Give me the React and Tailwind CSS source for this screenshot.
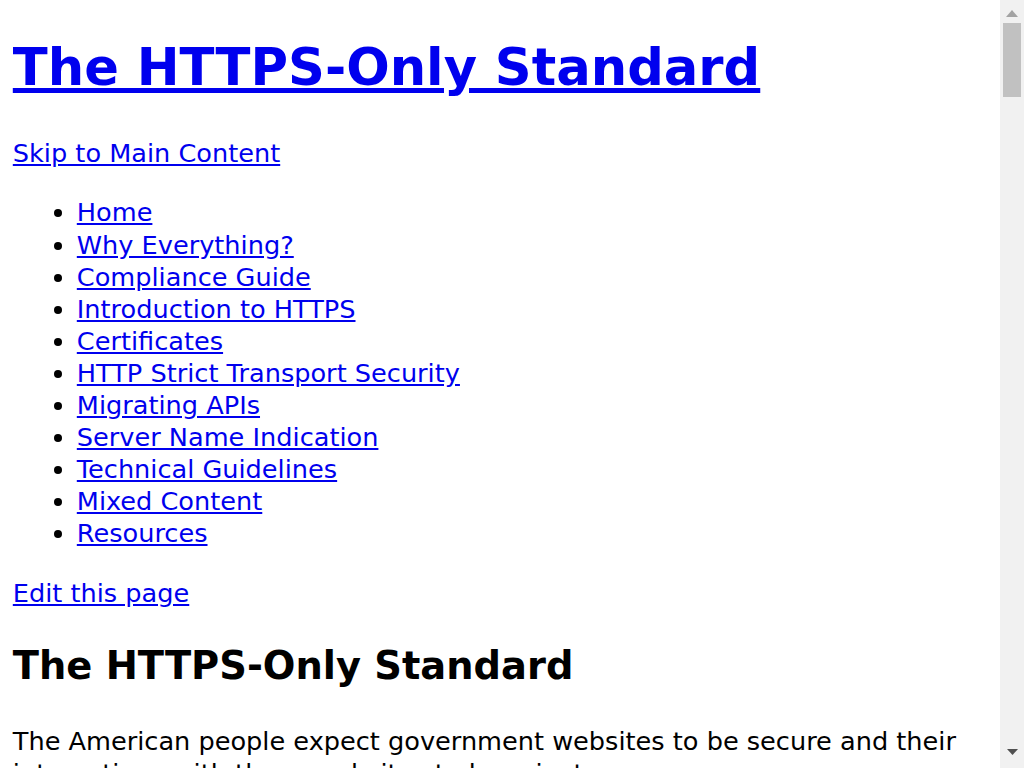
import React from 'react';

const navLinks = [
  'Home',
  'Why Everything?',
  'Compliance Guide',
  'Introduction to HTTPS',
  'Certificates',
  'HTTP Strict Transport Security',
  'Migrating APIs',
  'Server Name Indication',
  'Technical Guidelines',
  'Mixed Content',
  'Resources',
];

const linkClass = 'text-[#0000ee] underline';

function Scrollbar() {
  return (
    <aside className="w-[24px] shrink-0 bg-[#f1f1f1] flex flex-col items-center">
      <svg className="mt-[10px]" width="12" height="7" viewBox="0 0 12 7">
        <path d="M6 0 L12 7 L0 7 Z" fill="#a3a3a3" />
      </svg>
      <div className="mt-[6px] w-[18px] h-[74px] bg-[#c1c1c1]" />
      <div className="flex-1" />
      <svg className="mb-[13px]" width="11" height="6" viewBox="0 0 11 6">
        <path d="M0 0 L11 0 L5.5 6 Z" fill="#505050" />
      </svg>
    </aside>
  );
}

export default function App() {
  return (
    <div className="h-screen flex bg-white overflow-hidden">
      <div className="flex-1 min-w-0 text-black font-['DejaVu_Sans',sans-serif] text-[25.6px] leading-[32.1px] px-[12.8px] py-px">
        <header>
          <h1 className="text-[51.2px] leading-[64.2px] font-bold mt-[34.3px] mb-[37.3px]">
            <a href="#" className={linkClass}>The HTTPS-Only Standard</a>
          </h1>
          <p className="my-[27.6px]">
            <a href="#main" className={linkClass}>Skip to Main Content</a>
          </p>
          <nav>
            <ul className="list-disc pl-[64px] my-[27.6px]">
              {navLinks.map((label) => (
                <li key={label}>
                  <a href="#" className={linkClass}>{label}</a>
                </li>
              ))}
            </ul>
          </nav>
          <p className="my-[27.6px]">
            <a href="#" className={linkClass}>Edit this page</a>
          </p>
        </header>

        <main id="main">
          <h2 className="text-[38.4px] leading-[48.2px] font-bold mt-[32.9px] mb-[34.9px]">The HTTPS-Only Standard</h2>
          <p className="my-[27.6px]">
            The American people expect government websites to be secure and their interactions with those websites to be private.
          </p>
          <p className="my-[27.6px]">
            Hypertext Transfer Protocol Secure (HTTPS) offers the strongest privacy protection available for public web
            connections with today&apos;s internet technology.
          </p>
        </main>
      </div>
      <Scrollbar />
    </div>
  );
}
